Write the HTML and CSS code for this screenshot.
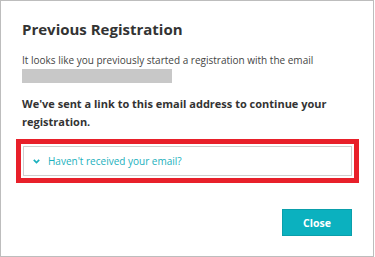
FILE: index.html
```html
<!DOCTYPE html>
<html lang="en">

<head>
  <meta charset="UTF-8">
  <meta name="viewport" content="width=device-width, initial-scale=1.0">
  <title>Previous Registration</title>
  <link rel="stylesheet" href="styles.css">
</head>

<body>
  <div class="dialog">
    <h1>Previous Registration</h1>
    <p class="intro">It looks like you previously started a registration with the email</p>
    <div class="email"></div>
    <p class="sent">We've sent a link to this email address to continue your registration.</p>
    <div class="highlight">
      <div class="toggle">
        <svg class="chev" width="7" height="5" viewBox="0 0 7 5">
          <path d="M0.8 0.9l2.7 2.7 2.7-2.7" fill="none" stroke="#1ab0bd" stroke-width="1.7" />
        </svg>
        <span>Haven't received your email?</span>
      </div>
    </div>
    <div class="foot">
      <button class="close">Close</button>
    </div>
  </div>
</body>

</html>
```

FILE: styles.css
```css
* {
  padding: 0;
  margin: 0;
  box-sizing: border-box;
}

body {
  width: 375px;
  height: 257px;
  background: #fff;
  font-family: "Open Sans", "Liberation Sans", sans-serif;
  color: #333;
}

.dialog {
  width: 374px;
  height: 257px;
  border: 1px solid #bdbdbd;
  padding: 17px 21px 0 21px;
}

.dialog h1 {
  font-size: 15px;
  font-weight: 700;
  line-height: 22px;
  color: #333;
}

.intro {
  margin-top: 13px;
  font-size: 10px;
  line-height: 14px;
  color: #444;
}

.email {
  width: 150px;
  height: 14px;
  margin-top: 2px;
  background: #c8c8c8;
}

.sent {
  margin-top: 12px;
  width: 320px;
  font-size: 11px;
  font-weight: 700;
  line-height: 18px;
  color: #333;
}

.highlight {
  margin: 8px 0 0 -6px;
  width: 343px;
  border: 5px solid #e8202a;
  padding: 2px;
}

.toggle {
  display: flex;
  align-items: center;
  gap: 8px;
  height: 30px;
  padding-left: 9px;
  border: 1px solid #cfcfcf;
  color: #1ab0bd;
  font-size: 10px;
}

.foot {
  display: flex;
  justify-content: flex-end;
  width: 330px;
  margin-top: 26px;
}

.close {
  width: 70px;
  height: 27px;
  border: 1px solid #0a9fab;
  background: #0bb1bf;
  color: #fff;
  font-family: "Open Sans", "Liberation Sans", sans-serif;
  font-size: 10.5px;
  font-weight: 700;
}
```
